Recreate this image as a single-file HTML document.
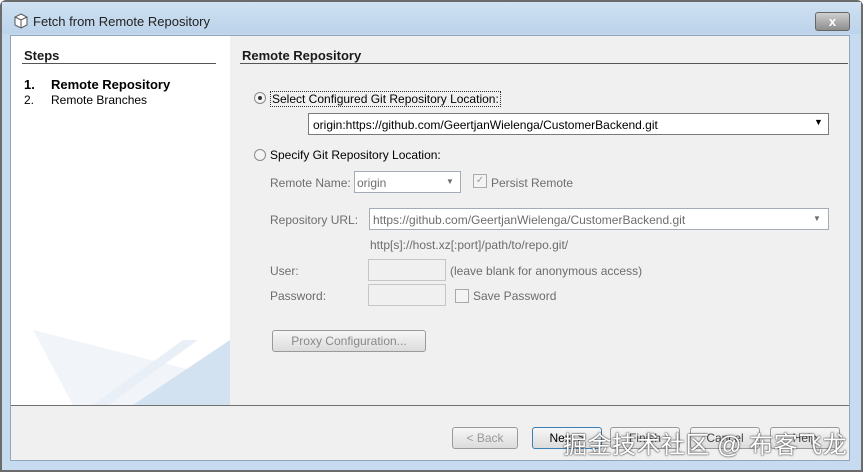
<!DOCTYPE html>
<html><head><style>
*{margin:0;padding:0;box-sizing:border-box}
body{width:863px;height:472px;background:#fff;font-family:"Liberation Sans",sans-serif;font-size:12px;color:#000;position:relative;overflow:hidden}
.a{position:absolute;white-space:nowrap}
.g{color:#6d6d6d}
.box{position:absolute;background:#fff;border:1px solid #a5acb5}
.dis{background:#f0f0f0;border:1px solid #c6c6c6}
.btn{position:absolute;border:1px solid #9a9a9a;border-radius:3px;background:linear-gradient(#f6f6f6,#dcdcdc);text-align:center;line-height:20px;color:#444}
.rad{position:absolute;width:12px;height:12px;border-radius:50%;border:1px solid #8a8a8a;background:#f4f4f4}
</style></head><body>
<div class="a" style="left:0;top:0;width:863px;height:472px;background:#c6dbef;border:2px solid #6b6b6b;border-radius:6px 6px 0 0"></div>
<div class="a" style="left:2px;top:2px;width:859px;height:32px;background:linear-gradient(#cfe1f2,#bcd3ea)"></div>
<svg class="a" style="left:13px;top:13px" width="16" height="16"><path d="M8 1 L14 4 L14 12 L8 15 L2 12 L2 4 Z" fill="#fff" stroke="#555"/><path d="M2 4 L8 7 L14 4 M8 7 V15" fill="none" stroke="#555"/></svg>
<div class="a" style="left:33px;top:14px;font-size:13px;color:#222">Fetch from Remote Repository</div>
<div class="a" style="left:815px;top:12px;width:35px;height:19px;border:1px solid #666;border-radius:3px;background:linear-gradient(#d0d0d0,#8d8d8d);color:#fff;text-align:center;font-weight:bold;font-size:13px;line-height:17px">x</div>
<div class="a" style="left:10px;top:35px;width:840px;height:426px;background:#f0f0f0;border:1px solid #8fa6bd"></div>
<div class="a" style="left:11px;top:36px;width:219px;height:369px;background:#fff"></div>
<svg class="a" style="left:13px;top:300px" width="217" height="105"><polygon points="20,30 217,80 217,105 60,105" fill="#f1f4f8"/><polygon points="120,105 217,40 217,105" fill="#d3e2f1"/><polygon points="170,40 80,105 95,105 185,40" fill="#e9eff6"/></svg>
<div class="a" style="left:11px;top:405px;width:838px;height:1px;background:#707070"></div>
<div class="a" style="left:24px;top:48px;font-weight:bold;font-size:13px;color:#1a1a1a">Steps</div>
<div class="a" style="left:22px;top:63px;width:194px;height:1px;background:#555"></div>
<div class="a" style="left:24px;top:77px;font-weight:bold;font-size:13px">1.</div>
<div class="a" style="left:51px;top:77px;font-weight:bold;font-size:13px">Remote Repository</div>
<div class="a" style="left:24px;top:93px">2.</div>
<div class="a" style="left:51px;top:93px">Remote Branches</div>
<div class="a" style="left:242px;top:48px;font-weight:bold;font-size:13px;color:#1a1a1a">Remote Repository</div>
<div class="a" style="left:240px;top:63px;width:608px;height:1px;background:#555"></div>
<div class="rad" style="left:254px;top:92px"><div style="position:absolute;left:3px;top:3px;width:4px;height:4px;border-radius:50%;background:#333"></div></div>
<div class="a" style="left:270px;top:91px;border:1px dotted #333;padding:0 1px">Select Configured Git Repository Location:</div>
<div class="box" style="left:308px;top:113px;width:521px;height:22px;border-color:#7a7a7a"></div>
<div class="a" style="left:313px;top:118px">origin:https://github.com/GeertjanWielenga/CustomerBackend.git</div>
<div class="a" style="left:814px;top:117px;font-size:9px">▼</div>
<div class="rad" style="left:254px;top:149px"></div>
<div class="a" style="left:270px;top:148px">Specify Git Repository Location:</div>
<div class="a g" style="left:270px;top:176px">Remote Name:</div>
<div class="box" style="left:354px;top:171px;width:107px;height:22px"></div>
<div class="a g" style="left:357px;top:176px">origin</div>
<div class="a g" style="left:446px;top:177px;font-size:8px">▼</div>
<div class="a" style="left:473px;top:174px;width:14px;height:14px;border:1px solid #aaa;background:#f4f4f4;color:#999;font-size:10px;text-align:center;line-height:12px">✓</div>
<div class="a g" style="left:491px;top:176px">Persist Remote</div>
<div class="a g" style="left:270px;top:213px">Repository URL:</div>
<div class="box" style="left:369px;top:208px;width:460px;height:22px"></div>
<div class="a g" style="left:373px;top:213px">https://github.com/GeertjanWielenga/CustomerBackend.git</div>
<div class="a g" style="left:813px;top:214px;font-size:8px">▼</div>
<div class="a g" style="left:370px;top:238px">http[s]://host.xz[:port]/path/to/repo.git/</div>
<div class="a g" style="left:270px;top:264px">User:</div>
<div class="a dis" style="left:368px;top:259px;width:78px;height:22px"></div>
<div class="a g" style="left:450px;top:264px">(leave blank for anonymous access)</div>
<div class="a g" style="left:270px;top:289px">Password:</div>
<div class="a dis" style="left:368px;top:284px;width:78px;height:22px"></div>
<div class="a" style="left:455px;top:289px;width:14px;height:14px;border:1px solid #aaa;background:#f4f4f4"></div>
<div class="a g" style="left:473px;top:289px">Save Password</div>
<div class="btn" style="left:272px;top:330px;width:154px;height:22px;color:#888">Proxy Configuration...</div>
<div class="btn" style="left:452px;top:427px;width:66px;height:22px;color:#999">&lt; Back</div>
<div class="btn" style="left:532px;top:427px;width:70px;height:22px;border-color:#3c7fb1;color:#000">Next &gt;</div>
<div class="btn" style="left:610px;top:427px;width:70px;height:22px">Finish</div>
<div class="btn" style="left:690px;top:427px;width:70px;height:22px">Cancel</div>
<div class="btn" style="left:770px;top:427px;width:70px;height:22px">Help</div>
<div class="a" style="left:563px;top:425px;font-size:24px;letter-spacing:0.5px;color:#fff;font-family:'Liberation Sans','Noto Sans CJK SC',sans-serif;text-shadow:0 0 2px #333,0 0 1px #333">掘金技术社区 @ 布客飞龙</div>
</body></html>
